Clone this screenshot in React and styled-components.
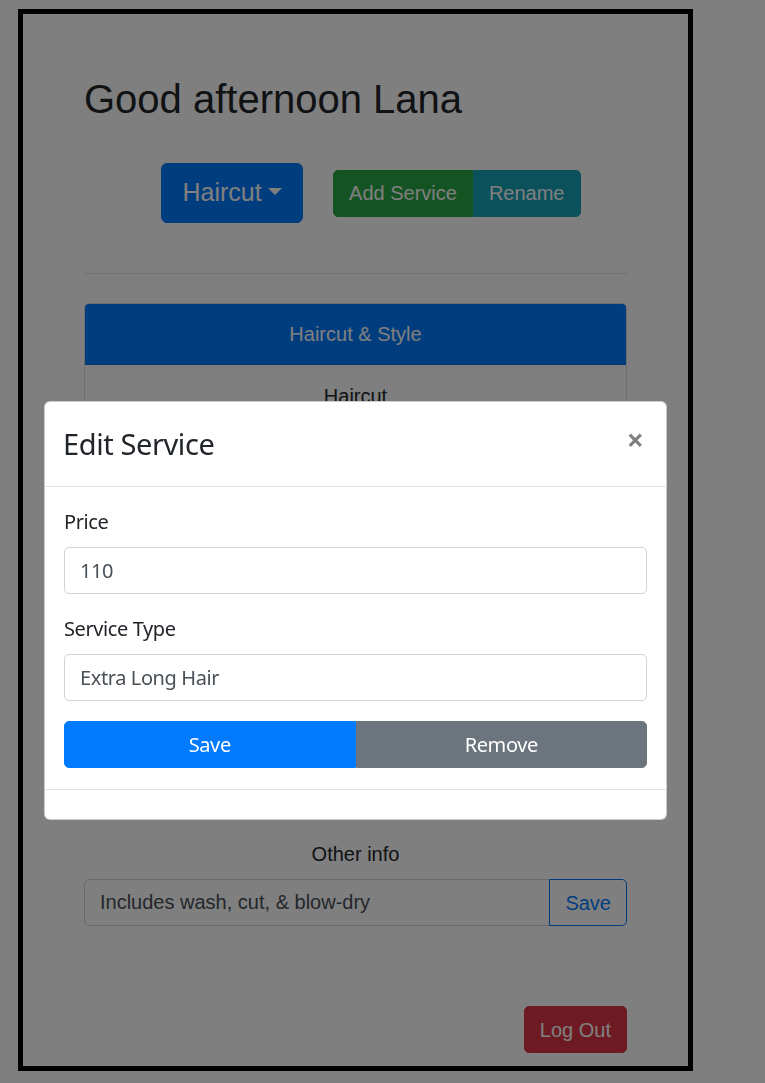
import styled, { createGlobalStyle } from 'styled-components'

const GlobalStyle = createGlobalStyle`
  *, *::before, *::after { box-sizing: border-box; }
  html, body { margin: 0; background: #fff; }
  body {
    font-family: "Liberation Sans", Arial, sans-serif;
    font-size: 20px;
    line-height: 1.5;
    color: #212529;
  }
`

const Frame = styled.div`
  width: 675px;
  margin: 9px 0 11px 18px;
  border: 5px solid #000;
  padding: 61px 61px 13px;
`

const Title = styled.h1`
  margin: 0;
  font-size: 40px;
  font-weight: 400;
  line-height: 1.2;
`

const ActionsRow = styled.div`
  display: flex;
  align-items: center;
  justify-content: center;
  gap: 30px;
  height: 60px;
  margin-top: 40px;
  padding-left: 31px;
`

const DropdownButton = styled.button`
  font-family: inherit;
  font-size: 25px;
  line-height: 1.5;
  padding: 10px 20px;
  color: #fff;
  background: #007bff;
  border: 1px solid #007bff;
  border-radius: 6px;

  &::after {
    content: "";
    display: inline-block;
    margin-left: 0.255em;
    vertical-align: 0.255em;
    border-top: 0.3em solid;
    border-right: 0.3em solid transparent;
    border-left: 0.3em solid transparent;
    border-bottom: 0;
  }
`

const ButtonGroup = styled.div`
  display: flex;
`

const GroupButton = styled.button`
  font-family: inherit;
  font-size: 20px;
  line-height: 1.5;
  padding: 7.5px 15px;
  color: #fff;
  background: ${({ $color }) => $color};
  border: 1px solid ${({ $color }) => $color};
  border-radius: 0;

  &:first-child { border-radius: 5px 0 0 5px; }
  &:last-child { border-radius: 0 5px 5px 0; }
`

const Divider = styled.hr`
  margin: 50px 0 0;
  border: 0;
  border-top: 1px solid rgba(0, 0, 0, 0.1);
`

const Card = styled.div`
  margin-top: 29px;
  border: 1px solid rgba(0, 0, 0, 0.125);
  border-radius: 5px;
  overflow: hidden;
`

const CardHeader = styled.div`
  padding: 15px 25px;
  background: #007bff;
  color: #fff;
  text-align: center;
  border-bottom: 1px solid rgba(0, 0, 0, 0.125);
`

const CardBody = styled.div`
  height: 433px;
  padding: 16px 25px;
  text-align: center;
`

const ServiceRow = styled.div`
  display: flex;
  justify-content: space-between;
  padding: 10px 0;
  border-top: 1px solid #dee2e6;
`

const OtherInfo = styled.div`
  margin-top: 40px;
`

const OtherLabel = styled.div`
  text-align: center;
  margin-bottom: 10px;
`

const InputGroup = styled.div`
  display: flex;
`

const TextInput = styled.input`
  flex: 1;
  min-width: 0;
  height: 47px;
  padding: 7.5px 15px;
  font-family: inherit;
  font-size: 20px;
  color: #495057;
  background: #fff;
  border: 1px solid #ced4da;
  border-radius: ${({ $grouped }) => ($grouped ? '5px 0 0 5px' : '5px')};
`

const OutlineButton = styled.button`
  margin-left: -1px;
  padding: 7.5px 15px;
  font-family: inherit;
  font-size: 20px;
  line-height: 1.5;
  color: #007bff;
  background: transparent;
  border: 1px solid #007bff;
  border-radius: 0 5px 5px 0;
`

const Footer = styled.div`
  display: flex;
  justify-content: flex-end;
  margin-top: 80px;
`

const DangerButton = styled.button`
  padding: 7.5px 15px;
  font-family: inherit;
  font-size: 20px;
  line-height: 1.5;
  color: #fff;
  background: #dc3545;
  border: 1px solid #dc3545;
  border-radius: 5px;
`

const Backdrop = styled.div`
  position: fixed;
  inset: 0;
  background: rgba(0, 0, 0, 0.5);
  padding: 401px 0 0 44px;
`

const Modal = styled.div`
  width: 623px;
  background: #fff;
  border: 1px solid rgba(0, 0, 0, 0.2);
  border-radius: 6px;
  font-family: "Noto Sans", "Open Sans", sans-serif;
  letter-spacing: -0.02em;
  color: #212529;
`

const ModalHeader = styled.div`
  display: flex;
  align-items: flex-start;
  justify-content: space-between;
  padding: 20px 20px 20px 18px;
  border-bottom: 1px solid #dee2e6;
`

const ModalTitle = styled.h5`
  margin: 0;
  font-size: 29px;
  font-weight: 400;
  line-height: 44px;
`

const CloseButton = styled.button`
  margin-top: 3px;
  padding: 0 2px;
  font-family: inherit;
  font-size: 30px;
  font-weight: 700;
  line-height: 1;
  color: #000;
  opacity: 0.5;
  background: transparent;
  border: 0;
`

const ModalBody = styled.div`
  padding: 20px 19px 21px;
`

const FormGroup = styled.div`
  margin-bottom: 20px;
`

const Label = styled.label`
  display: block;
  margin-bottom: 10px;
  font-size: 20px;
  line-height: 30px;
`

const ModalInput = styled(TextInput)`
  width: 100%;
  letter-spacing: inherit;
`

const SplitButtons = styled.div`
  display: flex;
`

const SplitButton = styled.button`
  flex: 1;
  height: 47px;
  font-family: inherit;
  font-size: 20px;
  letter-spacing: inherit;
  color: #fff;
  background: ${({ $color }) => $color};
  border: 1px solid ${({ $color }) => $color};
  border-radius: 0;

  &:first-child { border-radius: 5px 0 0 5px; }
  &:last-child { border-radius: 0 5px 5px 0; }
`

const ModalFooter = styled.div`
  height: 30px;
  border-top: 1px solid #dee2e6;
`

const services = [
  { type: 'Short Hair', price: 80 },
  { type: 'Long Hair', price: 95 },
  { type: 'Extra Long Hair', price: 110 },
]

export default function App() {
  return (
    <>
      <GlobalStyle />
      <Frame>
        <Title>Good afternoon Lana</Title>

        <ActionsRow>
          <DropdownButton>Haircut</DropdownButton>
          <ButtonGroup>
            <GroupButton $color="#28a745">Add Service</GroupButton>
            <GroupButton $color="#17a2b8">Rename</GroupButton>
          </ButtonGroup>
        </ActionsRow>

        <Divider />

        <Card>
          <CardHeader>Haircut &amp; Style</CardHeader>
          <CardBody>
            <div>Haircut</div>
            {services.map((s) => (
              <ServiceRow key={s.type}>
                <span>{s.type}</span>
                <span>${s.price}</span>
              </ServiceRow>
            ))}
          </CardBody>
        </Card>

        <OtherInfo>
          <OtherLabel>Other info</OtherLabel>
          <InputGroup>
            <TextInput $grouped defaultValue="Includes wash, cut, & blow-dry" />
            <OutlineButton>Save</OutlineButton>
          </InputGroup>
        </OtherInfo>

        <Footer>
          <DangerButton>Log Out</DangerButton>
        </Footer>
      </Frame>

      <Backdrop>
        <Modal>
          <ModalHeader>
            <ModalTitle>Edit Service</ModalTitle>
            <CloseButton aria-label="Close">×</CloseButton>
          </ModalHeader>
          <ModalBody>
            <FormGroup>
              <Label>Price</Label>
              <ModalInput defaultValue="110" />
            </FormGroup>
            <FormGroup>
              <Label>Service Type</Label>
              <ModalInput defaultValue="Extra Long Hair" />
            </FormGroup>
            <SplitButtons>
              <SplitButton $color="#007bff">Save</SplitButton>
              <SplitButton $color="#6c757d">Remove</SplitButton>
            </SplitButtons>
          </ModalBody>
          <ModalFooter />
        </Modal>
      </Backdrop>
    </>
  )
}
